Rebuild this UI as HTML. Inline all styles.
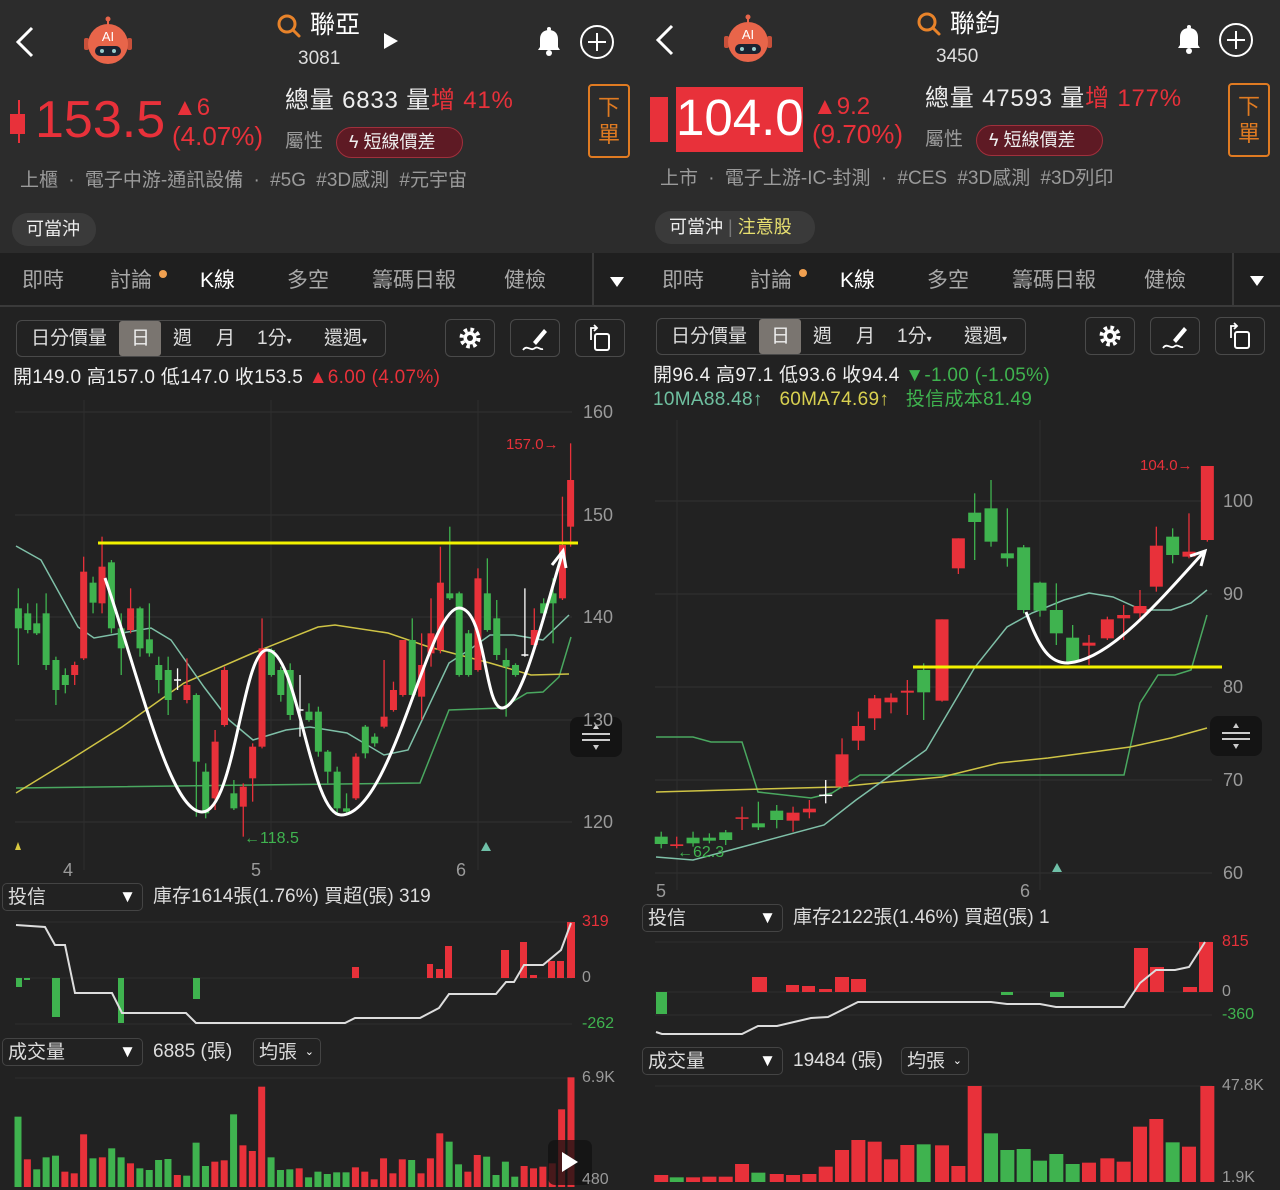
<!DOCTYPE html>
<html><head><meta charset="utf-8">
<style>
*{margin:0;padding:0;box-sizing:border-box}
body{width:1280px;height:1190px;background:#222;overflow:hidden;position:relative;font-family:"Liberation Sans","Noto Sans CJK TC",sans-serif;color:#ddd}
.a{position:absolute;white-space:nowrap;line-height:1}
.hdr{position:absolute;top:0;width:640px;height:253px;background:#2c2c2c}
.tabs{position:absolute;top:253px;width:640px;height:54px;background:#1f1f1f;border-bottom:2px solid #3a3a3a}
.tab{position:absolute;top:270px;font-size:21px;color:#a8a8a8;line-height:1;white-space:nowrap}
.red{color:#e8313a}.grn{color:#3fb34f}.gry{color:#9a9a9a}
.seg{position:absolute;height:37px;border:1.5px solid #4a4a4a;border-radius:6px}
.btn{position:absolute;width:50px;height:38px;border:1.5px solid #4a4a4a;border-radius:6px}
.dd{position:absolute;height:28px;border:1.5px solid #444;border-radius:5px;font-size:19px;color:#ddd;padding:4px 0 0 5px;line-height:1;white-space:nowrap}
.dd span{position:absolute;right:6px;top:4px;font-size:17px;color:#fff}
.badge{position:absolute;height:31px;border:1.5px solid #a0303c;background:#5e1a24;border-radius:16px;font-size:18px;color:#eee;padding:5px 0 0 12px;line-height:1;white-space:nowrap}
.order{position:absolute;width:42px;height:74px;border:2px solid #e07b22;border-radius:4px;color:#e07b22;font-size:22px;text-align:center;line-height:27px;padding-top:8px}
.pill{position:absolute;height:33px;background:#3a3a3a;border-radius:16px;font-size:18px;color:#eee;padding:7px 0 0 14px;line-height:1;white-space:nowrap}
.tb{font-size:19px}
</style></head><body>

<div class="hdr" style="left:0"></div>
<div class="hdr" style="left:640px"></div>
<div class="tabs" style="left:0"></div>
<div class="tabs" style="left:640px"></div>

<svg id="g" width="1280" height="1190" style="position:absolute;left:0;top:0">
<defs>
<g id="robot">
 <line x1="0" y1="-24" x2="0" y2="-18" stroke="#e8654a" stroke-width="2"/>
 <circle cx="0" cy="-25" r="2.5" fill="#e8654a"/>
 <rect x="-24" y="-6" width="5" height="12" rx="2" fill="#c8503a"/>
 <rect x="19" y="-6" width="5" height="12" rx="2" fill="#c8503a"/>
 <circle cx="0" cy="0" r="20" fill="#e8654a"/>
 <rect x="-13" y="2" width="26" height="10" rx="5" fill="#1c2230"/>
 <circle cx="-6" cy="7" r="2" fill="#9cc"/><circle cx="6" cy="7" r="2" fill="#9cc"/>
 <text x="0" y="-3" font-size="13" fill="#fff" text-anchor="middle" font-family="Liberation Sans">AI</text>
</g>
<g id="bell">
 <path d="M-11,8 L-9,5 L-9,-3 C-9,-9 -5,-12 0,-12 C5,-12 9,-9 9,-3 L9,5 L11,8 Z" fill="#fff"/>
 <circle cx="0" cy="-13" r="2" fill="#fff"/><circle cx="0" cy="11" r="3" fill="#fff"/>
</g>
<g id="plus"><circle r="16" fill="none" stroke="#fff" stroke-width="2"/><line x1="-9" y1="0" x2="9" y2="0" stroke="#fff" stroke-width="2"/><line x1="0" y1="-9" x2="0" y2="9" stroke="#fff" stroke-width="2"/></g>
<g id="srch"><circle cx="0" cy="0" r="8" fill="none" stroke="#e8832a" stroke-width="3"/><line x1="6" y1="6" x2="12" y2="12" stroke="#e8832a" stroke-width="3" stroke-linecap="round"/></g>
<g id="gear"><circle r="8.5" fill="none" stroke="#fff" stroke-width="4" stroke-dasharray="3.5 3.2"/><circle r="6.5" fill="#fff"/><circle r="3" fill="#222"/></g>
<g id="pen"><path d="M-2,4 L9,-9 L12,-6 L1,7 Z" fill="#fff"/><path d="M-12,12 C-8,6 -4,14 0,10 C3,8 5,12 8,11" stroke="#fff" fill="none" stroke-width="1.8"/></g>
<g id="rot"><rect x="-6" y="-4" width="14" height="16" rx="2" fill="none" stroke="#fff" stroke-width="2"/><path d="M-10,2 L-10,-10 L-4,-10 M-7,-13 L-4,-10 L-7,-7" fill="none" stroke="#fff" stroke-width="1.8"/></g>
<g id="flt"><rect x="-26" y="-20" width="52" height="40" rx="8" fill="#141414"/><line x1="-14" y1="-3" x2="14" y2="-3" stroke="#ccc" stroke-width="2"/><line x1="-14" y1="3" x2="14" y2="3" stroke="#ccc" stroke-width="2"/><path d="M-3,-8 L3,-8 L0,-13Z M-3,8 L3,8 L0,13Z" fill="#ccc"/></g>
</defs>

<polyline points="32,28 18,42 32,56" fill="none" stroke="#fff" stroke-width="3"/>
<polyline points="672,26 658,40 672,54" fill="none" stroke="#fff" stroke-width="3"/>
<use href="#robot" x="108" y="44"/><use href="#robot" x="748" y="42"/>
<use href="#srch" x="287" y="24"/><use href="#srch" x="927" y="22"/>
<path d="M384,33 L398,41 L384,49Z" fill="#fff"/>
<use href="#bell" x="549" y="42"/><use href="#bell" x="1189" y="40"/>
<use href="#plus" x="597" y="42"/><use href="#plus" x="1236" y="40"/>
<line x1="19" y1="100" x2="19" y2="143" stroke="#e8313a" stroke-width="2"/>
<rect x="10" y="114" width="15" height="20" fill="#e8313a"/>
<rect x="650" y="97" width="18" height="45" fill="#e8313a"/>
<rect x="676" y="87" width="127" height="65" fill="#e8313a"/>
<line x1="593" y1="253" x2="593" y2="307" stroke="#3a3a3a" stroke-width="2"/>
<line x1="1233" y1="253" x2="1233" y2="307" stroke="#3a3a3a" stroke-width="2"/>
<path d="M610,277 L624,277 L617,287Z M1250,276 L1264,276 L1257,286Z" fill="#fff"/>
<circle cx="163" cy="274" r="4" fill="#f0a050"/><circle cx="803" cy="273" r="4" fill="#f0a050"/>
<rect x="119" y="321" width="42" height="35" rx="3" fill="#7a7570"/>
<rect x="759" y="319" width="42" height="35" rx="3" fill="#7a7570"/>
<use href="#gear" x="470" y="338"/><use href="#pen" x="535" y="338"/><use href="#rot" x="601" y="338"/>
<use href="#gear" x="1110" y="336"/><use href="#pen" x="1175" y="336"/><use href="#rot" x="1241" y="336"/>

<g id="charts"></g>
</svg>

<!-- LEFT TEXT -->
<div class="a" style="left:310px;top:13px;font-size:25px;color:#fff">聯亞</div>
<div class="a" style="left:298px;top:49px;font-size:19px;color:#ddd">3081</div>
<div class="a red" style="left:35px;top:94px;font-size:52px">153.5</div>
<div class="a red" style="left:173px;top:96px;font-size:24px">▲6</div>
<div class="a red" style="left:172px;top:123px;font-size:26px">(4.07%)</div>
<div class="a" style="left:285px;top:89px;font-size:24px;color:#eee;letter-spacing:0.8px">總量 6833 量<span class="red">增 41%</span></div>
<div class="a gry" style="left:285px;top:132px;font-size:19px">屬性</div>
<div class="badge" style="left:336px;top:127px;width:127px">ϟ 短線價差</div>
<div class="order" style="left:588px;top:84px">下<br>單</div>
<div class="a gry" style="left:20px;top:171px;font-size:19px;word-spacing:5px">上櫃 · 電子中游-通訊設備 · #5G #3D感測 #元宇宙</div>
<div class="pill" style="left:12px;top:213px;width:84px">可當沖</div>
<div class="tab" style="left:22px">即時</div><div class="tab" style="left:110px">討論</div><div class="tab" style="left:200px;color:#fff">K線</div><div class="tab" style="left:287px">多空</div><div class="tab" style="left:372px">籌碼日報</div><div class="tab" style="left:504px">健檢</div>
<div class="seg" style="left:16px;top:320px;width:370px"></div>
<div class="a tb" style="left:31px;top:329px">日分價量</div><div class="a tb" style="left:131px;top:329px;color:#eee">日</div><div class="a tb" style="left:173px;top:329px">週</div><div class="a tb" style="left:216px;top:329px">月</div><div class="a tb" style="left:257px;top:329px">1分<span style="font-size:10px">▾</span></div><div class="a tb" style="left:324px;top:329px">還週<span style="font-size:10px">▾</span></div>
<div class="btn" style="left:445px;top:319px"></div><div class="btn" style="left:510px;top:319px"></div><div class="btn" style="left:575px;top:319px"></div>
<div class="a" style="left:13px;top:368px;font-size:19px;color:#eee;letter-spacing:0.3px">開149.0 高157.0 低147.0 收153.5 <span class="red">▲6.00 (4.07%)</span></div>
<div class="a gry" style="left:583px;top:403px;font-size:18px">160</div><div class="a gry" style="left:583px;top:506px;font-size:18px">150</div><div class="a gry" style="left:583px;top:608px;font-size:18px">140</div><div class="a gry" style="left:583px;top:711px;font-size:18px">130</div><div class="a gry" style="left:583px;top:813px;font-size:18px">120</div>
<div class="a red" style="left:506px;top:437px;font-size:15px">157.0→</div>
<div class="a grn" style="left:244px;top:831px;font-size:16px">←118.5</div>
<div class="a gry" style="left:63px;top:861px;font-size:18px">4</div><div class="a gry" style="left:251px;top:861px;font-size:18px">5</div><div class="a gry" style="left:456px;top:861px;font-size:18px">6</div>
<div class="dd" style="left:2px;top:883px;width:141px">投信<span>▼</span></div>
<div class="a" style="left:153px;top:887px;font-size:19px;color:#ddd">庫存1614張(1.76%) 買超(張) 319</div>
<div class="a red" style="left:582px;top:914px;font-size:16px">319</div><div class="a gry" style="left:582px;top:970px;font-size:16px">0</div><div class="a grn" style="left:582px;top:1016px;font-size:16px">-262</div>
<div class="dd" style="left:2px;top:1038px;width:141px">成交量<span>▼</span></div>
<div class="a" style="left:153px;top:1042px;font-size:19px">6885 (張)</div>
<div class="dd" style="left:253px;top:1038px;width:68px">均張<span style="font-size:11px;top:8px">⌄</span></div>
<div class="a gry" style="left:582px;top:1070px;font-size:16px">6.9K</div><div class="a gry" style="left:582px;top:1172px;font-size:16px">480</div>

<!-- RIGHT TEXT -->
<div class="a" style="left:950px;top:12px;font-size:25px;color:#fff">聯鈞</div>
<div class="a" style="left:936px;top:47px;font-size:19px;color:#ddd">3450</div>
<div class="a" style="left:676px;top:92px;font-size:51px;color:#fff">104.0</div>
<div class="a red" style="left:813px;top:95px;font-size:24px">▲9.2</div>
<div class="a red" style="left:812px;top:121px;font-size:26px">(9.70%)</div>
<div class="a" style="left:925px;top:87px;font-size:24px;color:#eee;letter-spacing:0.8px">總量 47593 量<span class="red">增 177%</span></div>
<div class="a gry" style="left:925px;top:130px;font-size:19px">屬性</div>
<div class="badge" style="left:976px;top:125px;width:127px">ϟ 短線價差</div>
<div class="order" style="left:1228px;top:83px">下<br>單</div>
<div class="a gry" style="left:660px;top:169px;font-size:19px;word-spacing:5px">上市 · 電子上游-IC-封測 · #CES #3D感測 #3D列印</div>
<div class="pill" style="left:655px;top:211px;width:160px">可當沖 <span style="color:#777">|</span> <span style="color:#e8e070">注意股</span></div>
<div class="tab" style="left:662px">即時</div><div class="tab" style="left:750px">討論</div><div class="tab" style="left:840px;color:#fff">K線</div><div class="tab" style="left:927px">多空</div><div class="tab" style="left:1012px">籌碼日報</div><div class="tab" style="left:1144px">健檢</div>
<div class="seg" style="left:656px;top:318px;width:370px"></div>
<div class="a tb" style="left:671px;top:327px">日分價量</div><div class="a tb" style="left:771px;top:327px;color:#eee">日</div><div class="a tb" style="left:813px;top:327px">週</div><div class="a tb" style="left:856px;top:327px">月</div><div class="a tb" style="left:897px;top:327px">1分<span style="font-size:10px">▾</span></div><div class="a tb" style="left:964px;top:327px">還週<span style="font-size:10px">▾</span></div>
<div class="btn" style="left:1085px;top:317px"></div><div class="btn" style="left:1150px;top:317px"></div><div class="btn" style="left:1215px;top:317px"></div>
<div class="a" style="left:653px;top:366px;font-size:19px;color:#eee;letter-spacing:0.3px">開96.4 高97.1 低93.6 收94.4 <span class="grn">▼-1.00 (-1.05%)</span></div>
<div class="a" style="left:653px;top:390px;font-size:19px;letter-spacing:0.3px"><span style="color:#6fc0a0">10MA88.48↑</span>&nbsp;&nbsp; <span style="color:#d8d050">60MA74.69↑</span>&nbsp;&nbsp; <span class="grn">投信成本81.49</span></div>
<div class="a gry" style="left:1223px;top:492px;font-size:18px">100</div><div class="a gry" style="left:1223px;top:585px;font-size:18px">90</div><div class="a gry" style="left:1223px;top:678px;font-size:18px">80</div><div class="a gry" style="left:1223px;top:771px;font-size:18px">70</div><div class="a gry" style="left:1223px;top:864px;font-size:18px">60</div>
<div class="a red" style="left:1140px;top:458px;font-size:15px">104.0→</div>
<div class="a grn" style="left:677px;top:845px;font-size:16px">←62.3</div>
<div class="a gry" style="left:656px;top:882px;font-size:18px">5</div><div class="a gry" style="left:1020px;top:882px;font-size:18px">6</div>
<div class="dd" style="left:642px;top:904px;width:141px">投信<span>▼</span></div>
<div class="a" style="left:793px;top:908px;font-size:19px">庫存2122張(1.46%) 買超(張) 1</div>
<div class="a red" style="left:1222px;top:934px;font-size:16px">815</div><div class="a gry" style="left:1222px;top:984px;font-size:16px">0</div><div class="a grn" style="left:1222px;top:1007px;font-size:16px">-360</div>
<div class="dd" style="left:642px;top:1047px;width:141px">成交量<span>▼</span></div>
<div class="a" style="left:793px;top:1051px;font-size:19px">19484 (張)</div>
<div class="dd" style="left:901px;top:1047px;width:68px">均張<span style="font-size:11px;top:8px">⌄</span></div>
<div class="a gry" style="left:1222px;top:1078px;font-size:16px">47.8K</div><div class="a gry" style="left:1222px;top:1170px;font-size:16px">1.9K</div>

<script>
var G=document.getElementById('charts'),h='';
var R='#e8313a',GR='#3fb34f',TL='#7fc0a8',YL='#cfc445',GS='#4aa860';
function ln(x1,y1,x2,y2,c,w){h+='<line x1="'+x1+'" y1="'+y1+'" x2="'+x2+'" y2="'+y2+'" stroke="'+c+'" stroke-width="'+(w||1)+'"/>';}
function rc(x,y,w,hh,c){h+='<rect x="'+x+'" y="'+y+'" width="'+w+'" height="'+Math.max(hh,1.5)+'" fill="'+c+'"/>';}
function pl(pts,c,w){h+='<polyline points="'+pts.map(function(p){return p.join(',')}).join(' ')+'" fill="none" stroke="'+c+'" stroke-width="'+(w||1.5)+'"/>';}
[412,515,617,720,822].forEach(function(y){ln(15,y,572,y,'#333')});
[84,271,478].forEach(function(x){ln(x,400,x,870,'#2d2d2d')});
[501,594,687,780,873].forEach(function(y){ln(655,y,1212,y,'#333')});
[677,1040].forEach(function(x){ln(x,420,x,890,'#2d2d2d')});
[922,978,1024].forEach(function(y){ln(15,y,572,y,'#2f2f2f')});
[942,992,1015].forEach(function(y){ln(655,y,1212,y,'#2f2f2f')});
ln(15,1078,572,1078,'#2f2f2f');ln(655,1086,1212,1086,'#2f2f2f');
pl([[16,788],[420,783],[449,710],[502,708],[527,693],[543,692],[559,677],[571,637]],GS);
pl([[16,793],[65,763],[122,727],[184,683],[253,653],[318,627],[335,625],[388,633],[429,647],[490,663],[531,675],[569,674]],YL);
pl([[16,546],[41,560],[78,627],[94,638],[122,633],[151,628],[171,640],[204,687],[229,720],[253,740],[286,730],[310,727],[347,733],[384,755],[408,750],[449,663],[469,650],[490,635],[514,635],[543,640],[569,615]],TL);
var Lc=[[45,'G',625,685,565,795],[68,'G',640,690,610,700],[90,'G',670,700,610,705],[113,'G',640,795,580,810],[137,'G',780,870,770,915],[160,'G',825,855,805,880],[183,'R',795,825,785,855],[205,'R',515,775,470,780],[228,'G',548,608,530,640],[250,'R',500,610,410,640],[273,'G',487,685,480,700],[297,'G',685,745,640,825],[320,'R',625,690,565,700],[343,'G',625,745,620,770],[366,'G',718,760,610,770],[389,'G',795,840,770,880],[412,'G',810,900,770,945],[435,'W',840,840,805,870],[458,'R',855,900,775,910],[481,'G',885,1085,880,1250],[504,'G',1115,1240,1090,1255],[527,'R',1025,1195,990,1230],[550,'R',810,975,800,980],[573,'G',1180,1225,1140,1230],[596,'R',1160,1220,1150,1310],[619,'R',1040,1135,1030,1205],[642,'R',745,1040,655,1045],[665,'G',750,825,745,830],[688,'G',810,885,800,905],[711,'G',810,945,790,960],[735,'W',930,930,825,1010],[757,'G',935,960,910,965],[780,'G',935,1055,920,1070],[803,'G',1055,1115,1050,1150],[826,'G',1115,1225,1100,1240],[849,'G',1225,1235,1180,1245],[872,'R',1070,1195,1060,1200],[895,'G',980,1060,975,1075],[918,'G',1010,1030,1000,1040],[941,'R',950,980,780,985],[964,'R',870,930,845,935],[987,'R',720,885,720,890],[1010,'G',720,885,655,890],[1033,'R',795,890,700,960],[1056,'R',700,760,595,800],[1079,'R',548,750,440,760],[1102,'G',580,595,380,600],[1125,'G',580,825,575,830],[1148,'G',700,825,690,830],[1171,'R',535,810,505,815],[1194,'G',580,690,475,695],[1217,'G',655,765,600,780],[1240,'G',780,800,745,950],[1263,'G',795,825,790,830],[1286,'W',765,765,565,770],[1309,'R',690,735,625,745],[1332,'G',610,640,595,650],[1355,'G',580,610,535,730],[1378,'R',435,595,290,600],[1398,'R',240,380,130,440]];
function cand(list,ox,bw){list.forEach(function(c){var x=ox+c[0]/2.45,c0=c[1]=='R'?R:c[1]=='G'?GR:'#fff';var t=400+c[2]/3,b=400+c[3]/3,wt=400+c[4]/3,wb=400+c[5]/3;ln(x,wt,x,wb,c0,1.3);if(c[1]=='W')ln(x-bw/2,t,x+bw/2,t,c0,1.5);else rc(x-bw/2,t,bw,b-t,c0);});}
cand(Lc,0,7);
ln(98,543,578,543,'#f2f200',3);
h+='<path d="M105,578 C140,680 170,812 202,812 C235,812 242,650 267,650 C298,650 310,815 341,815 C392,815 428,608 459,608 C486,608 484,708 502,708 C522,708 542,620 562,555" fill="none" stroke="#fff" stroke-width="3"/>';
h+='<path d="M552,565 L563,551 L566,568" fill="none" stroke="#fff" stroke-width="3"/>';
pl([[656,737],[693,737],[711,742],[742,742],[758,792],[811,798],[832,793],[860,775],[1124,775],[1140,703],[1158,675],[1175,675],[1191,670],[1207,615]],GS);
pl([[656,792],[836,787],[942,777],[999,763],[1048,758],[1130,747],[1171,738],[1207,728]],YL);
pl([[656,857],[693,860],[742,847],[824,825],[856,800],[926,750],[975,667],[1007,627],[1032,613],[1064,600],[1089,593],[1113,597],[1142,610],[1171,610],[1191,603],[1207,590]],TL);
var Rx=[52,90,130,170,210,250,290,335,375,415,455,495,535,575,615,655,695,740,780,820,860,900,940,980,1020,1060,1100,1145,1185,1225,1265,1305,1345,1390];
var Rd=[['G',1310,1332,1295,1345],['R',1333,1338,1310,1345],['G',1313,1330,1295,1340],['G',1313,1322,1300,1330],['G',1297,1320,1290,1335],['R',1252,1256,1220,1290],['G',1270,1282,1205,1290],['G',1232,1260,1215,1285],['R',1238,1262,1220,1295],['R',1226,1237,1200,1255],['W',1186,1186,1140,1210],['R',1063,1160,1015,1165],['R',978,1022,935,1050],['R',895,955,885,990],['R',893,907,880,940],['R',872,878,840,945],['G',810,877,790,960],['R',658,902,658,905],['R',415,505,415,522],['G',338,366,280,480],['G',325,425,240,440],['G',460,475,325,500],['G',442,630,435,640],['G',548,632,545,650],['G',630,700,550,735],['G',713,785,675,790],['R',728,737,705,795],['R',658,715,650,720],['R',645,655,615,720],['R',618,640,570,665],['R',437,560,380,575],['G',410,465,385,490],['R',455,470,340,475],['R',198,420,198,425]];
cand(Rd.map(function(d,i){return [Rx[i]].concat(d)}),640,13);
ln(913,667,1222,667,'#f2f200',3);
h+='<path d="M1026,612 C1040,650 1050,663 1068,663 C1110,660 1160,600 1203,553" fill="none" stroke="#fff" stroke-width="3"/>';
h+='<path d="M1190,556 L1205,551 L1201,566" fill="none" stroke="#fff" stroke-width="3"/>';
h+='<path d="M15,850 L21,850 L18,842Z" fill="#d8c840"/><path d="M481,851 L491,851 L486,842Z" fill="#6fc0a8"/><path d="M1052,872 L1062,872 L1057,863Z" fill="#6fc0a8"/>';
h+='<use href="#flt" x="596" y="737"/><use href="#flt" x="1236" y="736"/>';
[[16,22,978,987,GR],[24,30,978,980,GR],[52,60,978,1017,GR],[118,124,978,1023,GR],[193,200,978,999,GR],[352,359,967,978,R],[427,433,964,978,R],[436,443,969,978,R],[445,452,946,978,R],[501,509,950,978,R],[520,527,942,978,R],[530,537,975,978,R],[548,555,961,978,R],[557,564,961,978,R],[567,575,922,978,R]].forEach(function(b){rc(b[0],b[2],b[1]-b[0],b[3]-b[2],b[4])});
pl([[16,925],[45,927],[55,945],[65,945],[75,993],[112,993],[122,1013],[186,1013],[196,1023],[345,1023],[355,1018],[420,1018],[439,1008],[449,994],[496,994],[506,982],[514,982],[524,965],[543,965],[561,950],[571,923]],'#ddd',2);
[[656,667,992,1014,GR],[1001,1013,992,995,GR],[1050,1064,992,997,GR],[752,767,977,992,R],[786,799,985,992,R],[802,815,986,992,R],[819,832,989,992,R],[835,849,977,992,R],[851,866,979,992,R],[1134,1148,948,992,R],[1150,1164,967,992,R],[1183,1197,987,992,R],[1199,1213,942,992,R]].forEach(function(b){rc(b[0],b[2],b[1]-b[0],b[3]-b[2],b[4])});
pl([[656,1032],[662,1034],[742,1034],[758,1026],[777,1026],[811,1018],[828,1017],[858,1002],[991,1002],[1007,1004],[1040,1004],[1056,1007],[1124,1007],[1140,983],[1156,970],[1175,970],[1189,967],[1205,942]],'#ddd',2);
var Lv='G740 R868 G898 G862 G857 R905 R910 R793 G865 R862 G835 G862 R880 G895 G900 G870 G867 R915 G917 G818 G888 R875 R871 G733 R826 R843 R650 G862 G900 G898 R895 G922 G905 G912 G907 G907 R892 R905 R928 R865 R910 R868 G870 R910 R865 R790 G815 G883 R905 R855 G860 G915 G875 G920 R888 R895 R890 R880 R718 R622'.split(' ');
var st=(571-18)/(Lv.length-1);
Lv.forEach(function(v,i){var x=18+i*st,t=870+(+v.slice(1))/3;rc(x-3.5,t,7,1187-t,v[0]=='R'?R:GR)});
h+='<rect x="548" y="1140" width="44" height="45" rx="7" fill="#111" opacity="0.75"/><path d="M562,1152 L578,1162 L562,1172Z" fill="#fff"/>';
var Rv='R855 G862 R862 R860 R860 R822 G848 R852 R855 R852 R830 R780 R750 R755 R808 R765 G763 R766 R828 R588 G730 G780 G777 G812 G792 G822 R818 R805 R815 R710 R687 G757 R770 R588'.split(' ');
Rv.forEach(function(v,i){var x=640+Rx[i]/2.45,t=890+(+v.slice(1))/3;rc(x-7,t,14,1182-t,v[0]=='R'?R:GR)});
G.innerHTML=h;
</script>
</body></html>
